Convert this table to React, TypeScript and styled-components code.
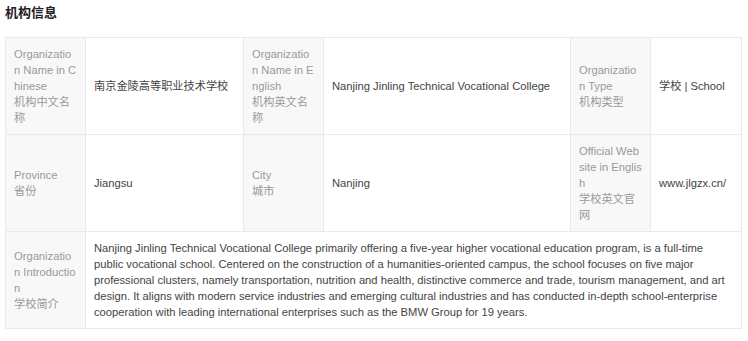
import React from 'react'
import styled, { createGlobalStyle } from "styled-components";

type Cell = { label: string[]; value: string };

const rows: Cell[][] = [
  [
    { label: ["Organization Name in Chinese", "机构中文名称"], value: "南京金陵高等职业技术学校" },
    { label: ["Organization Name in English", "机构英文名称"], value: "Nanjing Jinling Technical Vocational College" },
    { label: ["Organization Type", "机构类型"], value: "学校 | School" },
  ],
  [
    { label: ["Province", "省份"], value: "Jiangsu" },
    { label: ["City", "城市"], value: "Nanjing" },
    { label: ["Official Website in English", "学校英文官网"], value: "www.jlgzx.cn/" },
  ],
];

const intro =
  "Nanjing Jinling Technical Vocational College primarily offering a five-year higher vocational education program, is a full-time public vocational school. Centered on the construction of a humanities-oriented campus, the school focuses on five major professional clusters, namely transportation, nutrition and health, distinctive commerce and trade, tourism management, and art design. It aligns with modern service industries and emerging cultural industries and has conducted in-depth school-enterprise cooperation with leading international enterprises such as the BMW Group for 19 years.";

const colWidths = [80, 158, 80, 247, 80, 91];

const App = () => {
  return (
    <Page>
      <GlobalStyle />
      <Title>机构信息</Title>
      <InfoTable>
        <colgroup>
          {colWidths.map((w, i) => (
            <Col key={i} $width={w} />
          ))}
        </colgroup>
        <tbody>
          {rows.map((row, r) => (
            <Row key={r}>
              {row.map((cell, c) => (
                <React.Fragment key={c}>
                  <LabelCell>
                    {cell.label.map((l, i) => (
                      <div key={i}>{l}</div>
                    ))}
                  </LabelCell>
                  <ValueCell>{cell.value}</ValueCell>
                </React.Fragment>
              ))}
            </Row>
          ))}
          <Row>
            <LabelCell>
              <div>Organization Introduction</div>
              <div>学校简介</div>
            </LabelCell>
            <ValueCell colSpan={5}>{intro}</ValueCell>
          </Row>
        </tbody>
      </InfoTable>
    </Page>
  );
};

export default App


const GlobalStyle = createGlobalStyle`
  body {
    margin: 0;
    background: #fff;
    font-family: "Liberation Sans", "Noto Sans CJK SC", sans-serif;
  }
`;

const Page = styled.div`
  padding: 5px;
`;

const Title = styled.h3`
  margin: 0 0 16px;
  font-size: 13px;
  line-height: 16px;
  font-weight: bold;
  color: #222;
`;

const InfoTable = styled.table`
  width: 736px;
  table-layout: fixed;
  border-collapse: collapse;
  font-size: 11.2px;
  line-height: 16px;
`;

const Col = styled.col<{ $width: number }>`
  width: ${(p) => p.$width}px;
`;

const Row = styled.tr`
  height: 97px;
`;

const LabelCell = styled.td`
  padding: 8px 8px;
  background: #f8f8f9;
  border: 1px solid #e8eaf0;
  color: #999;
  word-break: break-all;
  vertical-align: middle;
`;

const ValueCell = styled.td`
  padding: 8px 8px;
  border: 1px solid #e8eaf0;
  color: #444;
  vertical-align: middle;
`;
